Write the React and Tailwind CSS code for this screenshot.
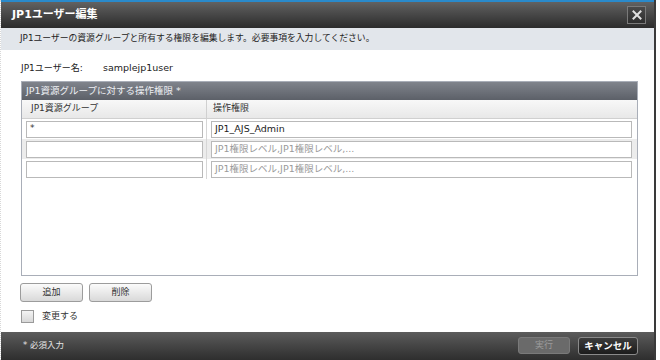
import React from "react";

const F = { fontFamily: '"DejaVu Sans", "Noto Sans CJK JP", sans-serif' };

function Row({ left, right, placeholder, gray }) {
  return (
    <div className={`flex h-[20px] items-center ${gray ? "bg-[#ececec]" : "bg-white"}`}>
      <div className="w-[185px] h-full flex items-center pl-[4px] pr-[3px] border-r border-[#d6d6d6]">
        <div className="w-full h-[17px] bg-white border border-[#b9b9b9] flex items-center px-[3px] text-[9px] text-[#333]">
          {left}
        </div>
      </div>
      <div className="flex-1 h-full flex items-center pl-[4px] pr-[5px]">
        <div className={`w-full h-[17px] bg-white border border-[#b9b9b9] flex items-center px-[3px] text-[9.5px] ${placeholder ? "text-[#9a9a9a]" : "text-[#222]"}`}>
          {right}
        </div>
      </div>
    </div>
  );
}

export default function App() {
  return (
    <div className="w-[660px] h-[360px] bg-white flex overflow-hidden" style={F}>
      <div className="w-[654px] h-full flex flex-col bg-white border-l border-dotted border-[#d8d8d8]">
        <div className="h-[2px] bg-[#2a8acb]" />
        <div className="h-[26px] flex items-center justify-between pl-[11px] pr-[8px] bg-gradient-to-b from-[#626262] to-[#2c2c2c]">
          <span className="text-[11px] font-bold text-white">JP1ユーザー編集</span>
          <div className="w-[19px] h-[18px] border border-[#7a7a7a] bg-gradient-to-b from-[#4a4a4a] to-[#2e2e2e] flex items-center justify-center">
            <svg width="10" height="10" viewBox="0 0 10 10">
              <path d="M1.5 1.5 L8.5 8.5 M8.5 1.5 L1.5 8.5" stroke="#e0e0e0" strokeWidth="2" strokeLinecap="square" />
            </svg>
          </div>
        </div>
        <div className="h-[22px] bg-[#e2e6eb] flex items-center pl-[19px] text-[8.8px] text-[#222]">
          JP1ユーザーの資源グループと所有する権限を編集します。必要事項を入力してください。
        </div>
        <div className="h-[31px] flex items-center pt-[6px] pl-[20px] text-[9px] text-[#222]">
          <span className="w-[82px]">JP1ユーザー名:</span>
          <span className="text-[9.5px]">samplejp1user</span>
        </div>
        <div className="ml-[20px] w-[617px] h-[195px] border border-[#a9aeb8] flex flex-col">
          <div className="h-[18px] bg-gradient-to-b from-[#80848c] to-[#5c6068] flex items-center pl-[4px] text-[9.5px] text-[#eef0f4]">
            JP1資源グループに対する操作権限 *
          </div>
          <div className="h-[19px] flex bg-gradient-to-b from-[#f8f8f8] to-[#e8e8e8] border-b border-[#d0d0d0] text-[9px] text-[#333]">
            <div className="w-[185px] pl-[9px] flex items-center border-r border-[#d0d0d0]">JP1資源グループ</div>
            <div className="flex-1 pl-[6px] flex items-center">操作権限</div>
          </div>
          <Row left="*" right="JP1_AJS_Admin" />
          <Row left="" right="JP1権限レベル,JP1権限レベル,..." placeholder gray />
          <Row left="" right="JP1権限レベル,JP1権限レベル,..." placeholder />
          <div className="flex-1 bg-white" />
        </div>
        <div className="mt-[7px] ml-[19px] flex gap-[6px]">
          <button className="w-[63px] h-[19px] rounded-[3px] border border-[#9c9c9c] bg-gradient-to-b from-[#fbfbfb] to-[#d9d9d9] text-[9px] text-[#333]">追加</button>
          <button className="w-[63px] h-[19px] rounded-[3px] border border-[#9c9c9c] bg-gradient-to-b from-[#fbfbfb] to-[#d9d9d9] text-[9px] text-[#333]">削除</button>
        </div>
        <div className="mt-[8px] ml-[20px] flex items-center gap-[8px]">
          <div className="w-[13px] h-[13px] border border-[#9a9a9a] bg-gradient-to-b from-[#f4f4f4] to-[#d8d8d8]" />
          <span className="text-[9px] text-[#333]">変更する</span>
        </div>
        <div className="mt-[8px] flex-1 bg-gradient-to-b from-[#5c5c5c] to-[#2e2e2e] flex items-center justify-between pl-[22px] pr-[16px]">
          <span className="text-[8.5px] text-[#e6e6e6]">* 必須入力</span>
          <div className="flex gap-[8px]">
            <div className="w-[52px] h-[17px] rounded-[3px] border border-[#7a7a7a] bg-[#6a6a6a] flex items-center justify-center text-[9px] text-[#9c9c9c]">実行</div>
            <div className="w-[60px] h-[18px] rounded-[3px] border border-[#8a8a8a] bg-gradient-to-b from-[#3c3c3c] to-[#1c1c1c] flex items-center justify-center text-[9.5px] font-bold text-white">キャンセル</div>
          </div>
        </div>
      </div>
      <div className="w-[2px] h-full bg-[#3a3a3a]" />
      <div className="flex-1 h-full bg-white" />
    </div>
  );
}
